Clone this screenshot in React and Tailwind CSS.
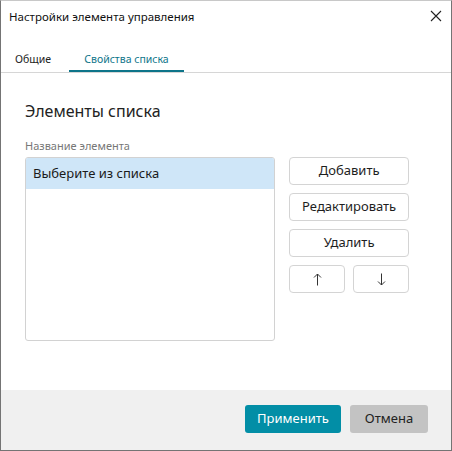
import React, { useState } from 'react';

const font = { fontFamily: '"Noto Sans", "Segoe UI", sans-serif' };

function SideButton({ children, className = '' }) {
  return (
    <button
      className={`h-[28px] rounded-[4px] border border-[#d4d4d4] bg-white text-[13px] text-[#1e1e1e] flex items-center justify-center ${className}`}
    >
      {children}
    </button>
  );
}

function Arrow({ down }) {
  return (
    <svg width="9" height="13" viewBox="0 0 9 13" style={down ? { transform: 'rotate(180deg)' } : undefined}>
      <path d="M4.5 1 V12.5 M1 4.5 L4.5 1 L8 4.5" stroke="#333" strokeWidth="1" fill="none" />
    </svg>
  );
}

export default function App() {
  const [tab, setTab] = useState('list');

  return (
    <div
      className="w-[452px] h-[451px] bg-white flex flex-col border border-[#747474] border-t-[#c8c8c8] text-[#1e1e1e]"
      style={font}
    >
      {/* title bar */}
      <div className="h-[32px] flex items-center justify-between pl-[8px] pr-[9px]">
        <span className="text-[11.5px] text-[#111]">Настройки элемента управления</span>
        <svg width="12" height="12" viewBox="0 0 12 12" className="mt-[-3px]">
          <path d="M1 1 L11 11 M11 1 L1 11" stroke="#222" strokeWidth="1.1" fill="none" />
        </svg>
      </div>

      {/* tabs */}
      <div className="flex border-b border-[#d6d6d6] h-[40px]">
        <button
          onClick={() => setTab('general')}
          className={`w-[68px] pl-[14px] text-left pt-[15px] text-[10.5px] leading-[14px] border-b-2 ${
            tab === 'general' ? 'border-[#0d7489] text-[#0d7489]' : 'border-transparent text-[#222]'
          }`}
        >
          Общие
        </button>
        <button
          onClick={() => setTab('list')}
          className={`w-[115px] pt-[15px] text-[10.5px] leading-[14px] border-b-2 ${
            tab === 'list' ? 'border-[#0d7489] text-[#0d7489]' : 'border-transparent text-[#222]'
          }`}
        >
          Свойства списка
        </button>
      </div>

      {/* content */}
      <div className="flex-1 pl-[24px] pr-[42px] pt-[27px]">
        <h2 className="text-[16px] leading-[22px] text-[#222]">Элементы списка</h2>
        <div className="mt-[16px] text-[11px] leading-[16px] text-[#777]">Название элемента</div>
        <div className="mt-[3px] flex gap-[14px]">
          <div className="w-[251px] h-[184px] border border-[#d2d2d2] rounded-[3px] overflow-hidden">
            <div className="h-[31px] bg-[#cfe6f8] pl-[7px] flex items-center text-[13px] text-[#1a1a1a]">
              Выберите из списка
            </div>
          </div>
          <div className="w-[120px] flex flex-col gap-[8px]">
            <SideButton>Добавить</SideButton>
            <SideButton>Редактировать</SideButton>
            <SideButton>Удалить</SideButton>
            <div className="flex gap-[8px]">
              <SideButton className="flex-1">
                <Arrow />
              </SideButton>
              <SideButton className="flex-1">
                <Arrow down />
              </SideButton>
            </div>
          </div>
        </div>
      </div>

      {/* footer */}
      <div className="h-[60px] bg-[#f0f0f0] flex items-center justify-end gap-[9px] pr-[23px] pb-[2px]">
        <button className="w-[96px] h-[28px] rounded-[3px] bg-[#028ea6] text-white text-[13px]">
          Применить
        </button>
        <button className="w-[78px] h-[28px] rounded-[3px] bg-[#c3c3c3] text-[#222] text-[13px]">
          Отмена
        </button>
      </div>
    </div>
  );
}
